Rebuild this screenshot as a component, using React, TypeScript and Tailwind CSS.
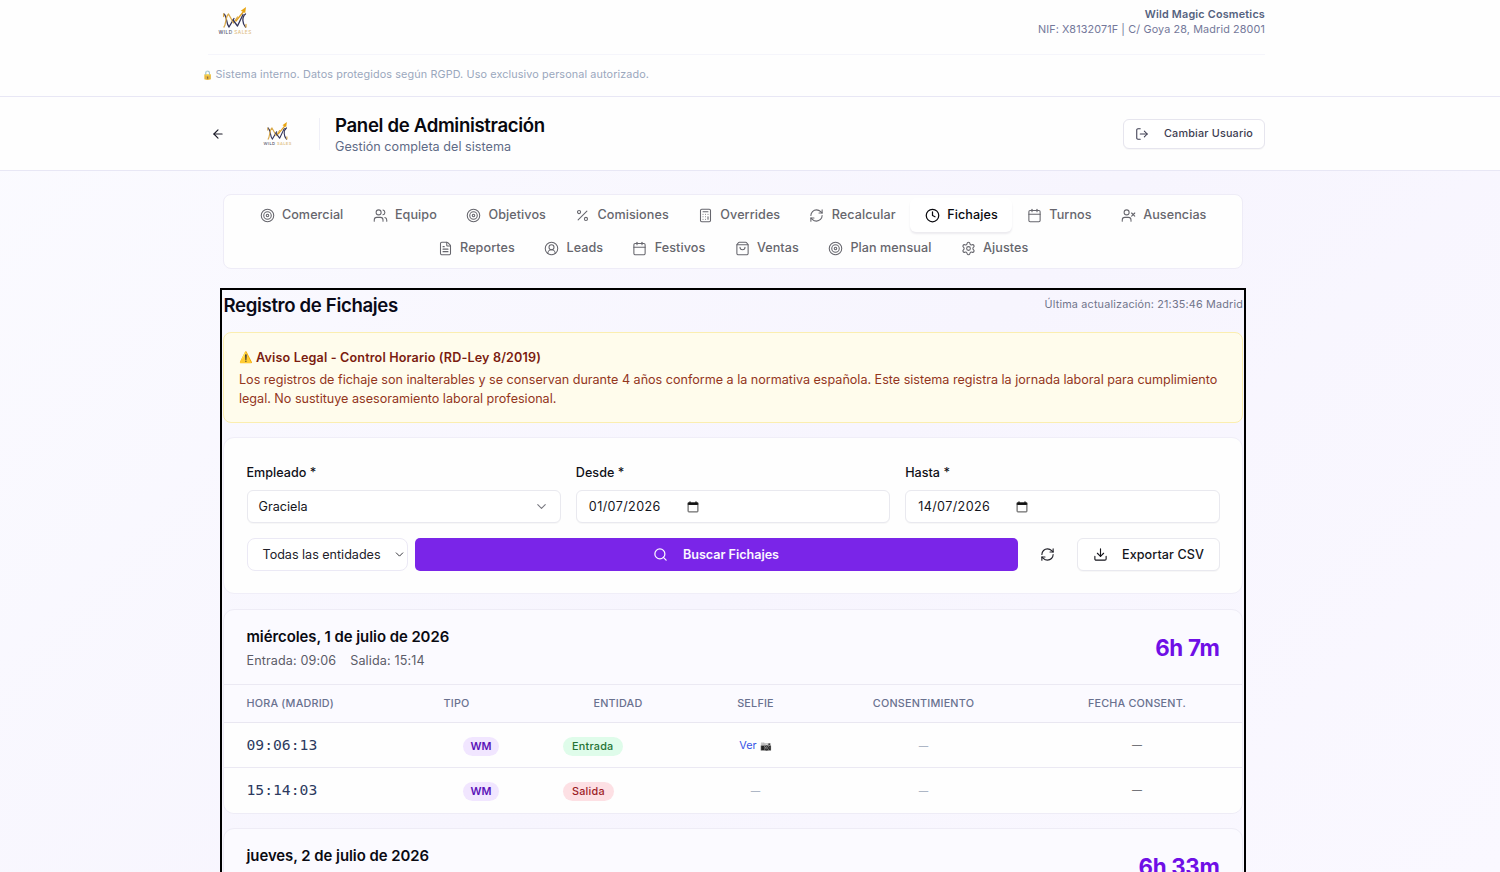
import React from "react";
import {
  ArrowLeft,
  Calculator,
  Calendar,
  ChevronDown,
  CircleUserRound,
  Clock,
  Download,
  FileText,
  LogOut,
  Percent,
  RefreshCw,
  Search,
  Settings,
  ShoppingBag,
  Target,
  UserX,
  Users,
  type LucideIcon,
} from "lucide-react";

type Tab = { label: string; icon: LucideIcon; active?: boolean };

const tabRows: Tab[][] = [
  [
    { label: "Comercial", icon: Target },
    { label: "Equipo", icon: Users },
    { label: "Objetivos", icon: Target },
    { label: "Comisiones", icon: Percent },
    { label: "Overrides", icon: Calculator },
    { label: "Recalcular", icon: RefreshCw },
    { label: "Fichajes", icon: Clock, active: true },
    { label: "Turnos", icon: Calendar },
    { label: "Ausencias", icon: UserX },
  ],
  [
    { label: "Reportes", icon: FileText },
    { label: "Leads", icon: CircleUserRound },
    { label: "Festivos", icon: Calendar },
    { label: "Ventas", icon: ShoppingBag },
    { label: "Plan mensual", icon: Target },
    { label: "Ajustes", icon: Settings },
  ],
];

function Logo({ className }: { className: string }) {
  return (
    <svg viewBox="0 0 34 29" className={className} fill="none" aria-label="Wild Sales">
      <g strokeWidth="1.3" strokeLinecap="round" strokeLinejoin="round">
        <path d="M6 8 C9.5 11 8 18 11 21 L16 12.5" stroke="#33345a" />
        <path d="M6 21 C8.5 18 7 11 10.5 8 L15.5 17 L19.5 11" stroke="#d9a94a" />
        <path d="M15 14 L19.5 20 L25 8.5" stroke="#33345a" />
        <path d="M27.5 8 C23.5 11 24.5 18 27.5 21" stroke="#33345a" />
        <path d="M18 15 L26 5" stroke="#e0a020" />
        <path d="M5.6 8 V10.5 M28 18.5 V21" stroke="#d9a94a" />
      </g>
      <path d="M22.8 4.8 L28 1 L27.2 7 Z" fill="#e8a512" />
      <text x="0.5" y="28" fontSize="4.8" fontWeight="500" letterSpacing="0.45" fill="#55556c" className="font-['Inter']">
        WILD <tspan fill="#dfc187">SALES</tspan>
      </text>
    </svg>
  );
}

function DateIcon() {
  return (
    <svg viewBox="0 0 12 12" className="h-3 w-3" fill="none">
      <path d="M3 0.5v2M9 0.5v2" stroke="#000" strokeWidth="1.3" />
      <path d="M0.8 1.5h10.4v2.4H0.8z" fill="#000" />
      <rect x="1.1" y="1.9" width="9.8" height="9" rx="0.6" stroke="#333" strokeWidth="0.9" />
    </svg>
  );
}

function TopBar() {
  return (
    <header className="h-[97px] border-b border-[#e8e7f5] bg-[#fefefe]">
      <div className="ml-[208px] flex h-[55px] w-[1057px] justify-between border-b border-[#f5f5fb]">
        <Logo className="ml-[10px] mt-[6px] h-[29px] w-[34px]" />
        <div className="mt-[7px] text-right text-[10.8px] leading-[15px]">
          <p className="font-semibold tracking-[0.2px] text-[#55627f]">Wild Magic Cosmetics</p>
          <p className="tracking-[0.13px] text-[#74789a]">NIF: X8132071F | C/ Goya 28, Madrid 28001</p>
        </div>
      </div>
      <p className="ml-[202px] mt-[12px] flex items-center text-[10.8px] leading-4 tracking-[0.12px] text-[#9aa7bd]">
        <span className="mr-[3.5px] w-[10px] text-[9px] tracking-normal opacity-80">🔒</span>
        Sistema interno. Datos protegidos según RGPD. Uso exclusivo personal autorizado.
      </p>
    </header>
  );
}

function PageHeader() {
  return (
    <div className="flex h-[74px] items-center border-b border-[#e8e7f5] bg-[#fefefe] pl-[211px] pr-[235px]">
      <ArrowLeft className="h-[14px] w-[14px] text-[#1b1b28]" />
      <Logo className="ml-[38px] h-[25px] w-[29px]" />
      <div className="ml-[27px] h-8 w-px bg-[#efeff7]" />
      <div className="ml-[15px] mt-[3px]">
        <h1 className="text-[18.6px] font-semibold leading-6 tracking-[-0.33px] text-[#08080f]">Panel de Administración</h1>
        <p className="text-[12.6px] leading-[20px] tracking-[0.03px] text-[#5f6b86]">Gestión completa del sistema</p>
      </div>
      <button className="ml-auto flex h-[30px] w-[142px] items-center rounded-md border border-[#e6e5ee] bg-white pl-[11px] pt-px text-[10.8px] font-medium tracking-[0.19px] text-[#3c3c50] shadow-[0_1px_1px_rgba(0,0,0,0.03)]">
        <LogOut className="h-[14px] w-[14px]" strokeWidth={1.8} />
        <span className="ml-[15px]">Cambiar Usuario</span>
      </button>
    </div>
  );
}

function Tabs() {
  return (
    <nav className="h-[75px] rounded-lg border border-[#eeecf7] bg-[#fefefe] pt-[3px]">
      {tabRows.map((row, i) => (
        <div key={i} className="flex h-[33.5px] justify-center">
          {row.map(({ label, icon: Icon, active }) => (
            <div
              key={label}
              className={
                active
                  ? "flex h-[34px] items-center gap-[7.4px] rounded-md bg-white px-[14.6px] text-[12.6px] font-medium tracking-[0.07px] text-[#0a0a0f] shadow-[0_2px_2px_rgba(20,10,60,0.08)]"
                  : "flex h-[34px] items-center gap-[7.4px] px-[14.6px] text-[12.6px] font-medium tracking-[0.07px] text-[#66666d]"
              }
            >
              <Icon className="h-[15px] w-[15px]" strokeWidth={active ? 2 : 1.7} />
              {label}
            </div>
          ))}
        </div>
      ))}
    </nav>
  );
}

function LegalNotice() {
  return (
    <section className="mt-[14px] h-[91px] rounded-lg border border-[#fbeeb0] bg-[#fffcec] pl-[15px] pr-[14px] pt-[15px] text-[12.6px]">
      <h3 className="flex items-center font-semibold leading-[19px] tracking-[0.15px] text-[#7b1c10]">
        <span className="w-[17px] text-[11px] tracking-normal">⚠️</span>
        Aviso Legal - Control Horario (RD-Ley 8/2019)
      </h3>
      <p className="mt-[4px] whitespace-nowrap leading-[18.6px] tracking-[-0.01px] text-[#93361d]">
        Los registros de fichaje son inalterables y se conservan durante 4 años conforme a la normativa española. Este sistema registra la jornada laboral para cumplimiento
        <br />
        legal. No sustituye asesoramiento laboral profesional.
      </p>
    </section>
  );
}

function Label({ children }: { children: React.ReactNode }) {
  return <span className="block text-[12.6px] font-medium leading-[18px] tracking-[0.01px] text-[#101018]">{children}</span>;
}

function DateField({ label, value }: { label: string; value: string }) {
  return (
    <div>
      <Label>{label}</Label>
      <div className="mt-[8px] flex h-[33px] items-center rounded-md border border-[#e9e9ef] bg-white pl-[12px] text-[12.6px] tracking-[0.38px] text-[#15151c] shadow-[0_1px_1px_rgba(0,0,0,0.03)]">
        <span className="w-[98px] pt-[2px]">{value}</span>
        <DateIcon />
      </div>
    </div>
  );
}

function Filters() {
  return (
    <section className="mt-[14px] h-[157px] rounded-[11px] border border-[#f0eef8] bg-[#fefefe] pl-[22.5px] pr-[22.5px] pt-[26px]">
      <div className="grid grid-cols-3 gap-[15px]">
        <div>
          <Label>Empleado *</Label>
          <div className="mt-[8px] flex h-[33px] items-center justify-between rounded-md border border-[#e9e9ef] bg-white pl-[11px] pr-[11px] text-[12.6px] tracking-[0.02px] text-[#15151c] shadow-[0_1px_1px_rgba(0,0,0,0.03)]">
            <span className="pt-[2px]">Graciela</span>
            <ChevronDown className="h-[15px] w-[15px] text-[#77777f]" strokeWidth={1.7} />
          </div>
        </div>
        <DateField label="Desde *" value="01/07/2026" />
        <DateField label="Hasta *" value="14/07/2026" />
      </div>
      <div className="mt-[15px] flex h-[33px] gap-[7px]">
        <div className="flex w-[161px] items-center justify-between rounded-lg border border-[#ebe9f5] bg-white pl-[15px] pr-px text-[12.6px] tracking-[-0.02px] text-[#22222a]">
          <span className="pt-[2px]">Todas las entidades</span>
          <ChevronDown className="h-[13px] w-[13px] text-[#33333a]" strokeWidth={1.8} />
        </div>
        <button className="flex w-[603px] items-center justify-center rounded-[5px] bg-[#7a25e8] text-[12.6px] font-semibold tracking-[-0.03px] text-[#fbf7ff]">
          <Search className="mr-[15px] h-[15px] w-[15px]" />
          <span className="pt-[2px]">Buscar Fichajes</span>
        </button>
        <button className="flex flex-1 items-center justify-center text-[#22222a]">
          <RefreshCw className="h-[15px] w-[15px]" strokeWidth={1.8} />
        </button>
        <button className="flex w-[143px] items-center rounded-md border border-[#e9e9ef] bg-white pl-[15px] text-[12.6px] font-medium tracking-[0.07px] text-[#15151c] shadow-[0_1px_1px_rgba(0,0,0,0.03)]">
          <Download className="mr-[14.5px] h-[15px] w-[15px]" strokeWidth={1.8} />
          <span className="pt-[2px]">Exportar CSV</span>
        </button>
      </div>
    </section>
  );
}

function Dash({ dark }: { dark?: boolean }) {
  return dark ? <span className="text-[10px] text-[#55555c]">—</span> : <span className="pt-[2px] text-[9.5px] text-[#9ba6b9]">—</span>;
}

const columns = "grid grid-cols-[197px_119px_156px_119px_217px_1fr] items-center";

function Row({ time, kind, selfie }: { time: string; kind: "Entrada" | "Salida"; selfie?: boolean }) {
  return (
    <div className={columns + " h-[45px] border-b border-[#ebe9f3] bg-[#fefefe] last:border-b-0"}>
      <span className="pl-[22.5px] font-['DejaVu_Sans_Mono',monospace] text-[14.7px] text-[#2c3a5e]">{time}</span>
      <span className="ml-px mt-[2px] justify-self-center rounded-full bg-[#f1e6ff] px-[7.5px] text-[10.8px] font-semibold leading-[19px] tracking-[0.1px] text-[#5a12b8]">WM</span>
      <span
        className={
          kind === "Entrada"
            ? "ml-[22.5px] mt-[2px] justify-self-start rounded-full bg-[#dffcea] px-[9.5px] text-[10.8px] font-medium leading-[19px] tracking-[0.25px] text-[#247334]"
            : "ml-[22.5px] mt-[2px] justify-self-start rounded-full bg-[#fde0e4] px-[9.5px] text-[10.8px] font-medium leading-[19px] tracking-[0.25px] text-[#9c1c26]"
        }
      >
        {kind}
      </span>
      <span className="flex items-center justify-self-center">
        {selfie ? (
          <span className="flex items-center pt-[3px] text-[10.8px] tracking-[0.1px] text-[#3553e6]">
            Ver <span className="ml-[3px] w-[12px] text-[9.5px] tracking-normal grayscale">📷</span>
          </span>
        ) : (
          <Dash />
        )}
      </span>
      <span className="flex justify-self-center"><Dash /></span>
      <span className="flex justify-self-center"><Dash dark /></span>
    </div>
  );
}

function DayHeader({ title, total, children }: { title: string; total: string; children?: React.ReactNode }) {
  return (
    <div className="flex h-[75px] items-start justify-between border-b border-[#ebe9f3] pl-[22.5px] pr-[22.5px] pt-[16px]">
      <div>
        <h3 className="text-[14.9px] font-semibold leading-[22px] tracking-[-0.04px] text-[#0a0a12]">{title}</h3>
        {children}
      </div>
      <span className="mt-[5px] text-[22.3px] font-bold leading-[34px] tracking-[-0.3px] text-[#6f0fe6]">{total}</span>
    </div>
  );
}

function ColumnTitles() {
  return (
    <div className={columns + " h-[38px] border-b border-[#e9e7f1] pt-[2px] text-[10.8px] font-medium tracking-[0.2px] text-[#69718f]"}>
      <span className="pl-[22.5px]">HORA (MADRID)</span>
      <span className="pl-[22.5px]">TIPO</span>
      <span className="text-center">ENTIDAD</span>
      <span className="text-center">SELFIE</span>
      <span className="text-center">CONSENTIMIENTO</span>
      <span className="text-center">FECHA CONSENT.</span>
    </div>
  );
}

const dayCard = "overflow-hidden rounded-[11px] border border-[#eeecf6] bg-[#fbfaff]";

export default function App() {
  return (
    <div className="h-[872px] w-[1500px] overflow-hidden bg-[linear-gradient(135deg,#fbfbff_0%,#f7f5fe_55%,#faf8ff_100%)] font-['Inter',sans-serif]">
      <TopBar />
      <PageHeader />
      <div className="ml-[223px] mt-[23px] w-[1020px]">
        <Tabs />
      </div>
      <main className="ml-[220px] mt-[19px] h-[620px] w-[1026px] border-2 border-black pl-px pr-px">
        <div className="flex h-[28px] items-center justify-between">
          <h2 className="pl-[0.5px] pt-[3px] text-[18.6px] font-semibold tracking-[-0.34px] text-[#0a0a18]">Registro de Fichajes</h2>
          <span className="pt-[3px] text-[10.8px] tracking-[0.18px] text-[#70748a]">Última actualización: 21:35:46 Madrid</span>
        </div>
        <LegalNotice />
        <Filters />
        <section className={dayCard + " mt-[15px]"}>
          <DayHeader title="miércoles, 1 de julio de 2026" total="6h 7m">
            <p className="mt-[3px] flex gap-[14px] text-[12.6px] leading-[19px] tracking-[0.12px] text-[#5c5c68]">
              <span>Entrada: 09:06</span>
              <span>Salida: 15:14</span>
            </p>
          </DayHeader>
          <ColumnTitles />
          <Row time="09:06:13" kind="Entrada" selfie />
          <Row time="15:14:03" kind="Salida" />
        </section>
        <section className={dayCard + " mt-[14px]"}>
          <DayHeader title="jueves, 2 de julio de 2026" total="6h 33m" />
        </section>
      </main>
    </div>
  );
}
